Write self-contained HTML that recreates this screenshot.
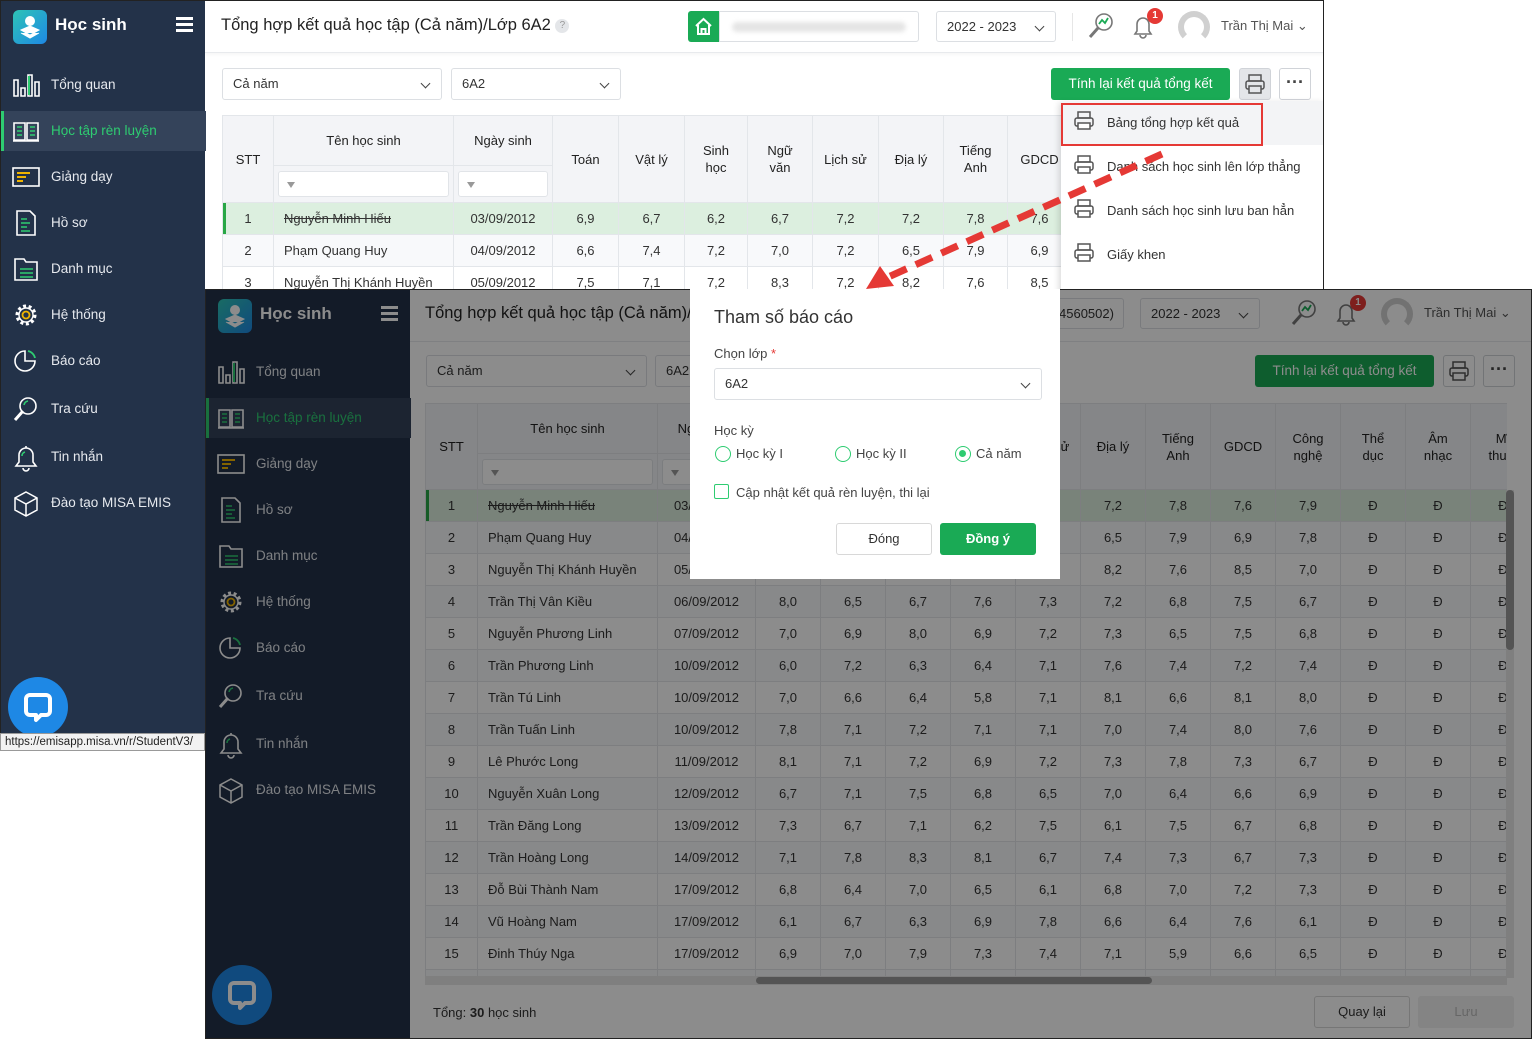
<!DOCTYPE html>
<html><head><meta charset="utf-8">
<style>
*{box-sizing:border-box;margin:0;padding:0}
body{width:1532px;height:1039px;position:relative;overflow:hidden;background:#fff;font-family:"Liberation Sans","Noto Sans CJK SC",sans-serif;font-size:13px;color:#333}
.abs{position:absolute}
.sb{position:absolute;background:#233249;color:#e6e9ee}
.sb .logo{position:absolute;left:12px;top:9px;width:34px;height:34px;border-radius:6px;background:linear-gradient(135deg,#2ec4b6,#1e88e5)}
.sb .ttl{position:absolute;left:54px;top:14px;font-size:17px;font-weight:bold;color:#fff}
.sb .hb{position:absolute;left:175px;top:16px;width:17px;height:15px;border-top:3px solid #fff;border-bottom:3px solid #fff}
.sb .hb:after{content:"";position:absolute;left:0;right:0;top:3px;border-top:3px solid #fff}
.sb .it{position:absolute;left:0;width:205px;height:40px;font-size:13.5px;line-height:40px;padding-left:50px}
.sb .it svg{position:absolute;left:11px;top:7px}
.sb .act{background:#34435a;color:#2ecc71;border-left:3px solid #2ecc71}
.chat{position:absolute;width:60px;height:60px;border-radius:50%;background:#1e88e5}
.chat svg{position:absolute;left:0;top:0}
.sel{position:absolute;border:1px solid #dcdfe3;border-radius:3px;background:#fff;padding-left:10px;font-size:13px;color:#333}
.sel:after{content:"";position:absolute;right:12px;top:11px;width:6px;height:6px;border-right:1.5px solid #444;border-bottom:1.5px solid #444;transform:rotate(45deg)}
table{border-collapse:collapse;table-layout:fixed}
td,th{border:1px solid #e3e6ea;text-align:center;font-weight:normal;overflow:hidden;white-space:nowrap}
th{background:#f3f4f7;color:#222;font-size:13px;line-height:17px}
td{height:32px;font-size:13px}
tr.g td{background:#dcefdf}
tr.a td{background:#f8f9fb}
td.n{text-align:left;padding-left:10px}
.flt{display:block;height:26px;border:1px solid #e1e4e8;background:#fff;border-radius:3px;margin:0 4px;position:relative}
.flt:before{content:"";position:absolute;left:8px;top:10px;border-left:4px solid transparent;border-right:4px solid transparent;border-top:6px solid #999}
.btn{position:absolute;border-radius:3px;text-align:center;font-size:13px}
</style></head><body>

<!-- ========== TOP SCREENSHOT ========== -->
<div class="abs" style="left:0;top:0;width:1324px;height:290px;border:1px solid #222;border-bottom:none;background:#fff;overflow:hidden">
 <div class="abs" style="left:204px;top:0;width:1120px;height:52px;border-bottom:1px solid #e8eaed;box-shadow:0 2px 3px rgba(0,0,0,.04)"></div>
 <div class="abs" style="left:220px;top:15px;font-size:16.5px;color:#222">Tổng hợp kết quả học tập (Cả năm)/Lớp 6A2 <span style="display:inline-block;width:14px;height:14px;border-radius:50%;background:#e4e6e9;color:#999;font-size:10px;text-align:center;line-height:14px;vertical-align:2px">?</span></div>
 <div class="abs" style="left:687px;top:10px;width:31px;height:31px;background:#1aaa55;border-radius:3px 0 0 3px"><svg width="31" height="31"><path d="M8 15 L15.5 8 L23 15 M10 14 V23 H21 V14 M13.5 23 V18 H17.5 V23" fill="none" stroke="#fff" stroke-width="2"/></svg></div>
 <div class="abs" style="left:718px;top:10px;width:200px;height:31px;border:1px solid #dcdfe3;border-radius:0 3px 3px 0"><div style="margin:10px 12px;height:10px;background:#e5e5e5;border-radius:5px;filter:blur(2px)"></div></div>
 <div class="sel" style="left:935px;top:10px;width:120px;height:31px;line-height:29px">2022 - 2023</div>
 <div class="abs" style="left:1071px;top:12px;height:28px;border-left:1px solid #e6e6e6"></div>
 <svg class="abs" style="left:1086px;top:10px" width="28" height="30"><circle cx="17" cy="11" r="8" fill="none" stroke="#777" stroke-width="1.6"/><path d="M12 13 L15 9 L18 12 L21 7" stroke="#1aaa55" stroke-width="1.8" fill="none"/><path d="M11 17 L3 26" stroke="#777" stroke-width="3"/></svg>
 <svg class="abs" style="left:1128px;top:10px" width="28" height="30"><path d="M6 23 H22 L20 20 V13 A6 6 0 0 0 8 13 V20 Z M11 24 A3 3 0 0 0 17 24" fill="none" stroke="#777" stroke-width="1.6"/></svg>
 <div class="abs" style="left:1146px;top:7px;width:16px;height:16px;border-radius:50%;background:#e53935;color:#fff;font-size:10px;font-weight:bold;text-align:center;line-height:16px">1</div>
 <div class="abs" style="left:1177px;top:10px;width:32px;height:32px;border-radius:50%;border:6px solid #d0d0d0;border-bottom-color:#fff"></div>
 <div class="abs" style="left:1220px;top:17px;font-size:13px;color:#555">Trần Thị Mai &#8964;</div>

 <div class="sel" style="left:221px;top:67px;width:220px;height:32px;line-height:30px">Cả năm</div>
 <div class="sel" style="left:450px;top:67px;width:170px;height:32px;line-height:30px">6A2</div>
 <div class="btn" style="left:1050px;top:67px;width:179px;height:32px;line-height:32px;background:#1aaa55;color:#fff;font-size:13.5px">Tính lại kết quả tổng kết</div>
 <div class="btn" style="left:1238px;top:67px;width:32px;height:32px;background:#e4e6e9;border:1px solid #d0d3d8"><svg width="30" height="30"><rect x="9" y="6" width="12" height="6" fill="none" stroke="#555" stroke-width="1.5"/><rect x="6" y="12" width="18" height="8" rx="2" fill="none" stroke="#555" stroke-width="1.5"/><rect x="9" y="17" width="12" height="7" fill="#e4e6e9" stroke="#555" stroke-width="1.5"/></svg></div>
 <div class="btn" style="left:1278px;top:67px;width:32px;height:32px;border:1px solid #d0d3d8;line-height:26px;font-size:18px;font-weight:bold;color:#444">&middot;&middot;&middot;</div>

 <table class="abs" style="left:221px;top:114px;width:860px">
  <colgroup><col style="width:51px"><col style="width:180px"><col style="width:99px"><col style="width:66px"><col style="width:66px"><col style="width:63px"><col style="width:65px"><col style="width:66px"><col style="width:65px"><col style="width:64px"><col style="width:64px"><col style="width:60px"></colgroup>
  <tr style="height:50px"><th rowspan="2">STT</th><th>Tên học sinh</th><th>Ngày sinh</th><th rowspan="2">Toán</th><th rowspan="2">Vật lý</th><th rowspan="2">Sinh<br>học</th><th rowspan="2">Ngữ<br>văn</th><th rowspan="2">Lịch sử</th><th rowspan="2">Địa lý</th><th rowspan="2">Tiếng<br>Anh</th><th rowspan="2">GDCD</th><th rowspan="2"></th></tr>
  <tr style="height:37px"><th><span class="flt"></span></th><th><span class="flt"></span></th></tr>
  <tr class="g"><td style="box-shadow:inset 3px 0 #28a745">1</td><td class="n"><s>Nguyễn Minh Hiếu</s></td><td>03/09/2012</td><td>6,9</td><td>6,7</td><td>6,2</td><td>6,7</td><td>7,2</td><td>7,2</td><td>7,8</td><td>7,6</td><td></td></tr>
  <tr class="a"><td>2</td><td class="n">Phạm Quang Huy</td><td>04/09/2012</td><td>6,6</td><td>7,4</td><td>7,2</td><td>7,0</td><td>7,2</td><td>6,5</td><td>7,9</td><td>6,9</td><td></td></tr>
  <tr><td>3</td><td class="n">Nguyễn Thị Khánh Huyền</td><td>05/09/2012</td><td>7,5</td><td>7,1</td><td>7,2</td><td>8,3</td><td>7,2</td><td>8,2</td><td>7,6</td><td>8,5</td><td></td></tr>
 </table>

 <!-- dropdown -->
 <div class="abs" style="left:1060px;top:100px;width:264px;height:200px;background:#fff;box-shadow:-2px 2px 6px rgba(0,0,0,.15)">
  <div class="abs" style="left:0;top:0;width:264px;height:44px;background:#f3f4f6"></div>
  <div class="abs" style="left:0;top:2px;width:202px;height:43px;border:2.5px solid #e53935"></div>
  <div class="abs" style="left:46px;top:14px;font-size:13px;color:#333">Bảng tổng hợp kết quả</div>
  <div class="abs" style="left:46px;top:58px;font-size:13px;color:#333">Danh sách học sinh lên lớp thẳng</div>
  <div class="abs" style="left:46px;top:102px;font-size:13px;color:#333">Danh sách học sinh lưu ban hẳn</div>
  <div class="abs" style="left:46px;top:146px;font-size:13px;color:#333">Giấy khen</div>
  <svg class="abs" style="left:12px;top:8px" width="24" height="180"><g fill="none" stroke="#555" stroke-width="1.5"><g id="p"><rect x="5" y="3" width="12" height="6"/><rect x="2" y="9" width="18" height="8" rx="2"/><rect x="5" y="14" width="12" height="6" fill="#fff"/></g><use href="#p" y="44"/><use href="#p" y="88"/><use href="#p" y="132"/></g></svg>
 </div>
</div>

<!-- top sidebar -->
<div class="sb" style="left:0;top:0;width:205px;height:733px;border-left:1px solid #222;border-top:1px solid #222">
 <div class="logo"><svg width="34" height="34"><circle cx="17" cy="11" r="5" fill="#fff"/><path d="M8 20 L17 16 L26 20 L17 25 Z M8 23 L17 28 L26 23" fill="#fff" stroke="#fff"/></svg></div>
 <div class="ttl">Học sinh</div><div class="hb"></div>
 <div class="it" style="top:64px"><svg width="28" height="26"><path d="M2 8h4v16H2zM9 16h4v8H9zM16 3h4v21h-4zM23 10h4v14h-4z" fill="none" stroke="#fff" stroke-width="1.6"/><path d="M17 4v19" stroke="#2ecc71" stroke-width="2"/></svg>Tổng quan</div>
 <div class="it act" style="top:110px;padding-left:47px"><svg width="28" height="26" style="left:8px"><path d="M2 5h11v17H2zM15 5h11v17H15zM1 23h26" fill="none" stroke="#fff" stroke-width="1.6"/><path d="M5 9h5M5 13h5M5 17h5M18 9h5M18 13h5M18 17h5" stroke="#2ecc71" stroke-width="1.6"/></svg>Học tập rèn luyện</div>
 <div class="it" style="top:156px"><svg width="28" height="26"><rect x="1" y="4" width="26" height="18" fill="none" stroke="#fff" stroke-width="1.6"/><path d="M5 9h13M5 13h9M5 17h6" stroke="#f0b400" stroke-width="2"/></svg>Giảng dạy</div>
 <div class="it" style="top:202px"><svg width="28" height="26"><path d="M5 1h13l5 5v19H5z" fill="none" stroke="#fff" stroke-width="1.6"/><path d="M9 9h6M9 13h9M9 17h6M9 21h9" stroke="#2ecc71" stroke-width="1.6"/></svg>Hồ sơ</div>
 <div class="it" style="top:248px"><svg width="28" height="26"><path d="M3 3h9l2 3h11v18H3z" fill="none" stroke="#fff" stroke-width="1.6"/><path d="M8 13h13M8 17h13M8 21h13" stroke="#2ecc71" stroke-width="1.6"/></svg>Danh mục</div>
 <div class="it" style="top:294px"><svg width="28" height="28"><circle cx="14" cy="13" r="9" fill="none" stroke="#fff" stroke-width="3" stroke-dasharray="3 2.6"/><circle cx="14" cy="13" r="7" fill="none" stroke="#fff" stroke-width="1.4"/><circle cx="14" cy="13" r="3.5" fill="none" stroke="#f0b400" stroke-width="1.8"/></svg>Hệ thống</div>
 <div class="it" style="top:340px"><svg width="28" height="28"><path d="M13 3A10 10 0 1 0 23 13H13Z" fill="none" stroke="#fff" stroke-width="1.6"/><path d="M16 3A9 9 0 0 1 23 10" stroke="#2ecc71" stroke-width="1.8" fill="none"/></svg>Báo cáo</div>
 <div class="it" style="top:388px"><svg width="28" height="28"><circle cx="16" cy="10" r="8" fill="none" stroke="#fff" stroke-width="1.6"/><path d="M11 15L3 24" stroke="#fff" stroke-width="3"/><path d="M12 9A5 5 0 0 1 16 5" stroke="#2ecc71" stroke-width="1.6" fill="none"/></svg>Tra cứu</div>
 <div class="it" style="top:436px"><svg width="28" height="28"><path d="M4 22H24L21 18V11A7 7 0 0 0 7 11V18Z M11 24A3 3 0 0 0 17 24 M14 2V4" fill="none" stroke="#fff" stroke-width="1.6"/><path d="M10 12A4 4 0 0 1 13 8" stroke="#2ecc71" stroke-width="1.6" fill="none"/></svg>Tin nhắn</div>
 <div class="it" style="top:482px"><svg width="28" height="28"><path d="M14 2L25 8V20L14 26L3 20V8Z M3 8L14 14L25 8 M14 14V26" fill="none" stroke="#fff" stroke-width="1.5"/></svg>Đào tạo MISA EMIS</div>
 <div class="chat" style="left:7px;top:676px"><svg width="60" height="60"><path d="M22 18 H38 A4 4 0 0 1 42 22 V34 A4 4 0 0 1 38 38 H33 L28 43 V38 H22 A4 4 0 0 1 18 34 V22 A4 4 0 0 1 22 18 Z" fill="none" stroke="#fff" stroke-width="4" stroke-linejoin="round"/></svg></div>
</div>
<div class="abs" style="left:0;top:733px;width:205px;height:18px;background:#f2f2f2;border:1px solid #999;font-size:11.5px;line-height:16px;padding-left:4px;color:#222;white-space:nowrap;overflow:hidden">https://emisapp.misa.vn/r/StudentV3/</div>

<!-- ========== BOTTOM SCREENSHOT ========== -->
<div class="abs" style="left:205px;top:289px;width:1327px;height:750px;border:1px solid #222;background:#fff;overflow:hidden">
 <div class="sb" style="left:0;top:0;width:204px;height:750px">
  <div class="logo"><svg width="34" height="34"><circle cx="17" cy="11" r="5" fill="#fff"/><path d="M8 20 L17 16 L26 20 L17 25 Z M8 23 L17 28 L26 23" fill="#fff" stroke="#fff"/></svg></div>
  <div class="ttl">Học sinh</div><div class="hb"></div>
  <div class="it" style="top:62px"><svg width="28" height="26"><path d="M2 8h4v16H2zM9 16h4v8H9zM16 3h4v21h-4zM23 10h4v14h-4z" fill="none" stroke="#fff" stroke-width="1.6"/><path d="M17 4v19" stroke="#2ecc71" stroke-width="2"/></svg>Tổng quan</div>
  <div class="it act" style="top:108px;padding-left:47px"><svg width="28" height="26" style="left:8px"><path d="M2 5h11v17H2zM15 5h11v17H15zM1 23h26" fill="none" stroke="#fff" stroke-width="1.6"/><path d="M5 9h5M5 13h5M5 17h5M18 9h5M18 13h5M18 17h5" stroke="#2ecc71" stroke-width="1.6"/></svg>Học tập rèn luyện</div>
  <div class="it" style="top:154px"><svg width="28" height="26"><rect x="1" y="4" width="26" height="18" fill="none" stroke="#fff" stroke-width="1.6"/><path d="M5 9h13M5 13h9M5 17h6" stroke="#f0b400" stroke-width="2"/></svg>Giảng dạy</div>
  <div class="it" style="top:200px"><svg width="28" height="26"><path d="M5 1h13l5 5v19H5z" fill="none" stroke="#fff" stroke-width="1.6"/><path d="M9 9h6M9 13h9M9 17h6M9 21h9" stroke="#2ecc71" stroke-width="1.6"/></svg>Hồ sơ</div>
  <div class="it" style="top:246px"><svg width="28" height="26"><path d="M3 3h9l2 3h11v18H3z" fill="none" stroke="#fff" stroke-width="1.6"/><path d="M8 13h13M8 17h13M8 21h13" stroke="#2ecc71" stroke-width="1.6"/></svg>Danh mục</div>
  <div class="it" style="top:292px"><svg width="28" height="28"><circle cx="14" cy="13" r="9" fill="none" stroke="#fff" stroke-width="3" stroke-dasharray="3 2.6"/><circle cx="14" cy="13" r="7" fill="none" stroke="#fff" stroke-width="1.4"/><circle cx="14" cy="13" r="3.5" fill="none" stroke="#f0b400" stroke-width="1.8"/></svg>Hệ thống</div>
  <div class="it" style="top:338px"><svg width="28" height="28"><path d="M13 3A10 10 0 1 0 23 13H13Z" fill="none" stroke="#fff" stroke-width="1.6"/><path d="M16 3A9 9 0 0 1 23 10" stroke="#2ecc71" stroke-width="1.8" fill="none"/></svg>Báo cáo</div>
  <div class="it" style="top:386px"><svg width="28" height="28"><circle cx="16" cy="10" r="8" fill="none" stroke="#fff" stroke-width="1.6"/><path d="M11 15L3 24" stroke="#fff" stroke-width="3"/><path d="M12 9A5 5 0 0 1 16 5" stroke="#2ecc71" stroke-width="1.6" fill="none"/></svg>Tra cứu</div>
  <div class="it" style="top:434px"><svg width="28" height="28"><path d="M4 22H24L21 18V11A7 7 0 0 0 7 11V18Z M11 24A3 3 0 0 0 17 24 M14 2V4" fill="none" stroke="#fff" stroke-width="1.6"/><path d="M10 12A4 4 0 0 1 13 8" stroke="#2ecc71" stroke-width="1.6" fill="none"/></svg>Tin nhắn</div>
  <div class="it" style="top:480px"><svg width="28" height="28"><path d="M14 2L25 8V20L14 26L3 20V8Z M3 8L14 14L25 8 M14 14V26" fill="none" stroke="#fff" stroke-width="1.5"/></svg>Đào tạo MISA EMIS</div>
  <div class="chat" style="left:6px;top:675px"><svg width="60" height="60"><path d="M22 18 H38 A4 4 0 0 1 42 22 V34 A4 4 0 0 1 38 38 H33 L28 43 V38 H22 A4 4 0 0 1 18 34 V22 A4 4 0 0 1 22 18 Z" fill="none" stroke="#fff" stroke-width="4" stroke-linejoin="round"/></svg></div>
 </div>
 <div class="abs" style="left:204px;top:0;width:1123px;height:52px;border-bottom:1px solid #e8eaed"></div>
 <div class="abs" style="left:219px;top:14px;font-size:16.5px;color:#222">Tổng hợp kết quả học tập (Cả năm)/Lớp 6A2</div>
 <div class="abs" style="left:850px;top:8px;width:68px;height:31px;border:1px solid #dcdfe3;border-radius:3px;line-height:29px;font-size:13px;padding-left:2px">4560502)</div>
 <div class="sel" style="left:934px;top:8px;width:120px;height:31px;line-height:29px">2022 - 2023</div>
 <svg class="abs" style="left:1084px;top:8px" width="28" height="30"><circle cx="17" cy="11" r="8" fill="none" stroke="#777" stroke-width="1.6"/><path d="M12 13 L15 9 L18 12 L21 7" stroke="#1aaa55" stroke-width="1.8" fill="none"/><path d="M11 17 L3 26" stroke="#777" stroke-width="3"/></svg>
 <svg class="abs" style="left:1126px;top:8px" width="28" height="30"><path d="M6 23 H22 L20 20 V13 A6 6 0 0 0 8 13 V20 Z M11 24 A3 3 0 0 0 17 24" fill="none" stroke="#777" stroke-width="1.6"/></svg>
 <div class="abs" style="left:1144px;top:5px;width:16px;height:16px;border-radius:50%;background:#e53935;color:#fff;font-size:10px;font-weight:bold;text-align:center;line-height:16px">1</div>
 <div class="abs" style="left:1175px;top:8px;width:32px;height:32px;border-radius:50%;border:6px solid #d0d0d0;border-bottom-color:#fff"></div>
 <div class="abs" style="left:1218px;top:15px;font-size:13px;color:#555">Trần Thị Mai &#8964;</div>

 <div class="sel" style="left:220px;top:65px;width:221px;height:32px;line-height:30px">Cả năm</div>
 <div class="sel" style="left:449px;top:65px;width:170px;height:32px;line-height:30px">6A2</div>
 <div class="btn" style="left:1049px;top:65px;width:179px;height:32px;line-height:32px;background:#1aaa55;color:#fff;font-size:13.5px">Tính lại kết quả tổng kết</div>
 <div class="btn" style="left:1237px;top:65px;width:32px;height:32px;border:1px solid #d0d3d8"><svg width="30" height="30"><rect x="9" y="6" width="12" height="6" fill="none" stroke="#555" stroke-width="1.5"/><rect x="6" y="12" width="18" height="8" rx="2" fill="none" stroke="#555" stroke-width="1.5"/><rect x="9" y="17" width="12" height="7" fill="#fff" stroke="#555" stroke-width="1.5"/></svg></div>
 <div class="btn" style="left:1277px;top:65px;width:32px;height:32px;border:1px solid #d0d3d8;line-height:26px;font-size:18px;font-weight:bold;color:#444">&middot;&middot;&middot;</div>

 <div class="abs" style="left:219px;top:113px;width:1082px;height:575px;overflow:hidden">
 <table style="width:1110px">
  <colgroup><col style="width:52px"><col style="width:180px"><col style="width:98px"><col span="12" style="width:65px"></colgroup>
  <tr style="height:50px"><th rowspan="2">STT</th><th>Tên học sinh</th><th>Ngày sinh</th><th rowspan="2">Toán</th><th rowspan="2">Vật lý</th><th rowspan="2">Sinh<br>học</th><th rowspan="2">Ngữ<br>văn</th><th rowspan="2">Lịch sử</th><th rowspan="2">Địa lý</th><th rowspan="2">Tiếng<br>Anh</th><th rowspan="2">GDCD</th><th rowspan="2">Công<br>nghệ</th><th rowspan="2">Thể<br>dục</th><th rowspan="2">Âm<br>nhạc</th><th rowspan="2">Mĩ<br>thuật</th></tr>
  <tr style="height:36px"><th><span class="flt"></span></th><th><span class="flt"></span></th></tr>
  <tr class="g"><td style="box-shadow:inset 3px 0 #28a745">1</td><td class="n"><s>Nguyễn Minh Hiếu</s></td><td>03/09/2012</td><td>6,9</td><td>6,7</td><td>6,2</td><td>6,7</td><td>7,2</td><td>7,2</td><td>7,8</td><td>7,6</td><td>7,9</td><td>Đ</td><td>Đ</td><td>Đ</td></tr>
  <tr class="a"><td>2</td><td class="n">Phạm Quang Huy</td><td>04/09/2012</td><td>6,6</td><td>7,4</td><td>7,2</td><td>7,0</td><td>7,2</td><td>6,5</td><td>7,9</td><td>6,9</td><td>7,8</td><td>Đ</td><td>Đ</td><td>Đ</td></tr>
  <tr><td>3</td><td class="n">Nguyễn Thị Khánh Huyền</td><td>05/09/2012</td><td>7,5</td><td>7,1</td><td>7,2</td><td>8,3</td><td>7,2</td><td>8,2</td><td>7,6</td><td>8,5</td><td>7,0</td><td>Đ</td><td>Đ</td><td>Đ</td></tr>
  <tr class="a"><td>4</td><td class="n">Trần Thị Vân Kiều</td><td>06/09/2012</td><td>8,0</td><td>6,5</td><td>6,7</td><td>7,6</td><td>7,3</td><td>7,2</td><td>6,8</td><td>7,5</td><td>6,7</td><td>Đ</td><td>Đ</td><td>Đ</td></tr>
  <tr><td>5</td><td class="n">Nguyễn Phương Linh</td><td>07/09/2012</td><td>7,0</td><td>6,9</td><td>8,0</td><td>6,9</td><td>7,2</td><td>7,3</td><td>6,5</td><td>7,5</td><td>6,8</td><td>Đ</td><td>Đ</td><td>Đ</td></tr>
  <tr class="a"><td>6</td><td class="n">Trần Phương Linh</td><td>10/09/2012</td><td>6,0</td><td>7,2</td><td>6,3</td><td>6,4</td><td>7,1</td><td>7,6</td><td>7,4</td><td>7,2</td><td>7,4</td><td>Đ</td><td>Đ</td><td>Đ</td></tr>
  <tr><td>7</td><td class="n">Trần Tú Linh</td><td>10/09/2012</td><td>7,0</td><td>6,6</td><td>6,4</td><td>5,8</td><td>7,1</td><td>8,1</td><td>6,6</td><td>8,1</td><td>8,0</td><td>Đ</td><td>Đ</td><td>Đ</td></tr>
  <tr class="a"><td>8</td><td class="n">Trần Tuấn Linh</td><td>10/09/2012</td><td>7,8</td><td>7,1</td><td>7,2</td><td>7,1</td><td>7,1</td><td>7,0</td><td>7,4</td><td>8,0</td><td>7,6</td><td>Đ</td><td>Đ</td><td>Đ</td></tr>
  <tr><td>9</td><td class="n">Lê Phước Long</td><td>11/09/2012</td><td>8,1</td><td>7,1</td><td>7,2</td><td>6,9</td><td>7,2</td><td>7,3</td><td>7,8</td><td>7,3</td><td>6,7</td><td>Đ</td><td>Đ</td><td>Đ</td></tr>
  <tr class="a"><td>10</td><td class="n">Nguyễn Xuân Long</td><td>12/09/2012</td><td>6,7</td><td>7,1</td><td>7,5</td><td>6,8</td><td>6,5</td><td>7,0</td><td>6,4</td><td>6,6</td><td>6,9</td><td>Đ</td><td>Đ</td><td>Đ</td></tr>
  <tr><td>11</td><td class="n">Trần Đăng Long</td><td>13/09/2012</td><td>7,3</td><td>6,7</td><td>7,1</td><td>6,2</td><td>7,5</td><td>6,1</td><td>7,5</td><td>6,7</td><td>6,8</td><td>Đ</td><td>Đ</td><td>Đ</td></tr>
  <tr class="a"><td>12</td><td class="n">Trần Hoàng Long</td><td>14/09/2012</td><td>7,1</td><td>7,8</td><td>8,3</td><td>8,1</td><td>6,7</td><td>7,4</td><td>7,3</td><td>6,7</td><td>7,3</td><td>Đ</td><td>Đ</td><td>Đ</td></tr>
  <tr><td>13</td><td class="n">Đỗ Bùi Thành Nam</td><td>17/09/2012</td><td>6,8</td><td>6,4</td><td>7,0</td><td>6,5</td><td>6,1</td><td>6,8</td><td>7,0</td><td>7,2</td><td>7,3</td><td>Đ</td><td>Đ</td><td>Đ</td></tr>
  <tr class="a"><td>14</td><td class="n">Vũ Hoàng Nam</td><td>17/09/2012</td><td>6,1</td><td>6,7</td><td>6,3</td><td>6,9</td><td>7,8</td><td>6,6</td><td>6,4</td><td>7,6</td><td>6,1</td><td>Đ</td><td>Đ</td><td>Đ</td></tr>
  <tr><td>15</td><td class="n">Đinh Thúy Nga</td><td>17/09/2012</td><td>6,9</td><td>7,0</td><td>7,9</td><td>7,3</td><td>7,4</td><td>7,1</td><td>5,9</td><td>6,6</td><td>6,5</td><td>Đ</td><td>Đ</td><td>Đ</td></tr>
  <tr class="a"><td>16</td><td class="n"></td><td></td><td></td><td></td><td></td><td></td><td></td><td></td><td></td><td></td><td></td><td></td><td></td><td></td></tr>
 </table>
 </div>
 <div class="abs" style="left:219px;top:686px;width:1082px;height:9px;background:#e8e8e8"></div>
 <div class="abs" style="left:550px;top:687px;width:396px;height:7px;background:#9a9a9a;border-radius:4px"></div>
 <div class="abs" style="left:1300px;top:200px;width:8px;height:488px;background:#e8e8e8"></div>
 <div class="abs" style="left:1300px;top:200px;width:8px;height:160px;background:#9a9a9a;border-radius:4px"></div>
 <div class="abs" style="left:227px;top:715px;font-size:13px;color:#333">Tổng: <b>30</b> học sinh</div>
 <div class="btn" style="left:1108px;top:706px;width:96px;height:32px;line-height:30px;border:1px solid #d8d8d8;background:#fff">Quay lại</div>
 <div class="btn" style="left:1212px;top:706px;width:96px;height:32px;line-height:32px;background:#f0f0f0;color:#bbb">Lưu</div>
 <!-- overlay -->
 <div class="abs" style="left:0;top:0;width:1327px;height:750px;background:rgba(0,0,0,.45)"></div>
</div>

<!-- modal -->
<div class="abs" style="left:690px;top:289px;width:370px;height:290px;background:#fff">
 <div class="abs" style="left:24px;top:18px;font-size:18px;color:#333">Tham số báo cáo</div>
 <div class="abs" style="left:24px;top:57px;font-size:13px;color:#444">Chọn lớp <span style="color:#e53935">*</span></div>
 <div class="sel" style="left:24px;top:79px;width:328px;height:32px;line-height:30px">6A2</div>
 <div class="abs" style="left:24px;top:134px;font-size:13px;color:#444">Học kỳ</div>
 <div class="abs" style="left:25px;top:157px;width:16px;height:16px;border:1.5px solid #2ecc71;border-radius:50%"></div>
 <div class="abs" style="left:46px;top:157px;font-size:13px;color:#444">Học kỳ I</div>
 <div class="abs" style="left:145px;top:157px;width:16px;height:16px;border:1.5px solid #2ecc71;border-radius:50%"></div>
 <div class="abs" style="left:166px;top:157px;font-size:13px;color:#444">Học kỳ II</div>
 <div class="abs" style="left:265px;top:157px;width:16px;height:16px;border:1.5px solid #2ecc71;border-radius:50%"><div style="margin:3px;width:7px;height:7px;border-radius:50%;background:#2ecc71"></div></div>
 <div class="abs" style="left:286px;top:157px;font-size:13px;color:#444">Cả năm</div>
 <div class="abs" style="left:24px;top:195px;width:15px;height:15px;border:1.5px solid #2ecc71;border-radius:2px"></div>
 <div class="abs" style="left:46px;top:196px;font-size:13px;color:#444">Cập nhật kết quả rèn luyện, thi lại</div>
 <div class="btn" style="left:146px;top:234px;width:96px;height:32px;line-height:30px;border:1px solid #d8d8d8;color:#333">Đóng</div>
 <div class="btn" style="left:250px;top:234px;width:96px;height:32px;line-height:32px;background:#1aaa55;color:#fff;font-weight:bold">Đồng ý</div>
</div>

<!-- arrow -->
<svg class="abs" style="left:0;top:0" width="1532" height="1039">
 <line x1="1162" y1="154" x2="886" y2="278" stroke="#e53935" stroke-width="7" stroke-dasharray="18 10"/>
 <path d="M866 289 L880 266 L894 286 Z" fill="#e53935"/>
</svg>
</body></html>
